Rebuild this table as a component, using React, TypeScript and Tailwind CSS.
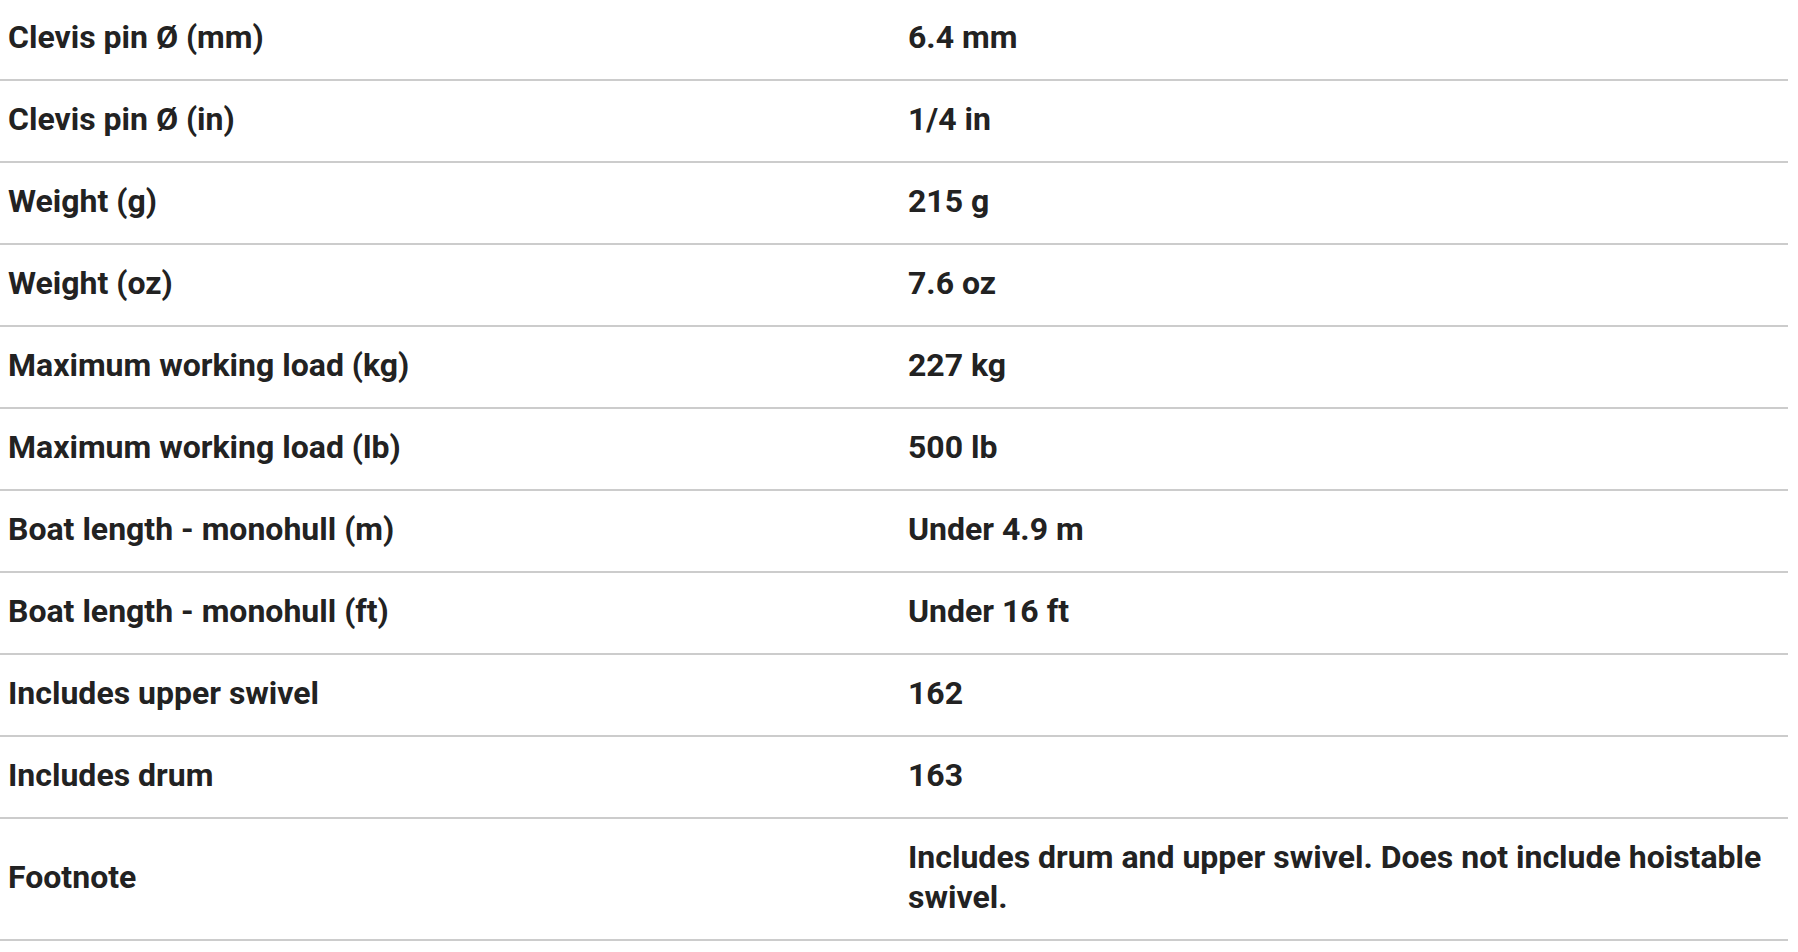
import React from "react";

const rows: [string, string][] = [
  ["Clevis pin Ø (mm)", "6.4 mm"],
  ["Clevis pin Ø (in)", "1/4 in"],
  ["Weight (g)", "215 g"],
  ["Weight (oz)", "7.6 oz"],
  ["Maximum working load (kg)", "227 kg"],
  ["Maximum working load (lb)", "500 lb"],
  ["Boat length - monohull (m)", "Under 4.9 m"],
  ["Boat length - monohull (ft)", "Under 16 ft"],
  ["Includes upper swivel", "162"],
  ["Includes drum", "163"],
  ["Footnote", "Includes drum and upper swivel. Does not include hoistable swivel."],
];

export default function App() {
  return (
    <div
      className="min-h-screen w-full bg-white text-[#222222]"
      style={{ fontFamily: "Roboto, 'Liberation Sans', sans-serif" }}
    >
      <div className="-mt-px w-[1788px]">
        {rows.map(([label, value], i) => (
          <div
            key={i}
            className={`grid grid-cols-[900px_1fr] items-center border-b-2 border-[#cccccc] text-[32px] font-bold leading-[40px] ${
              i === rows.length - 1 ? "min-h-[122px]" : "min-h-[82px]"
            }`}
          >
            <div className="pl-2 pr-4 pb-[4px]">{label}</div>
            <div className="pl-2 pr-6 pb-[4px]">{value}</div>
          </div>
        ))}
      </div>
    </div>
  );
}
